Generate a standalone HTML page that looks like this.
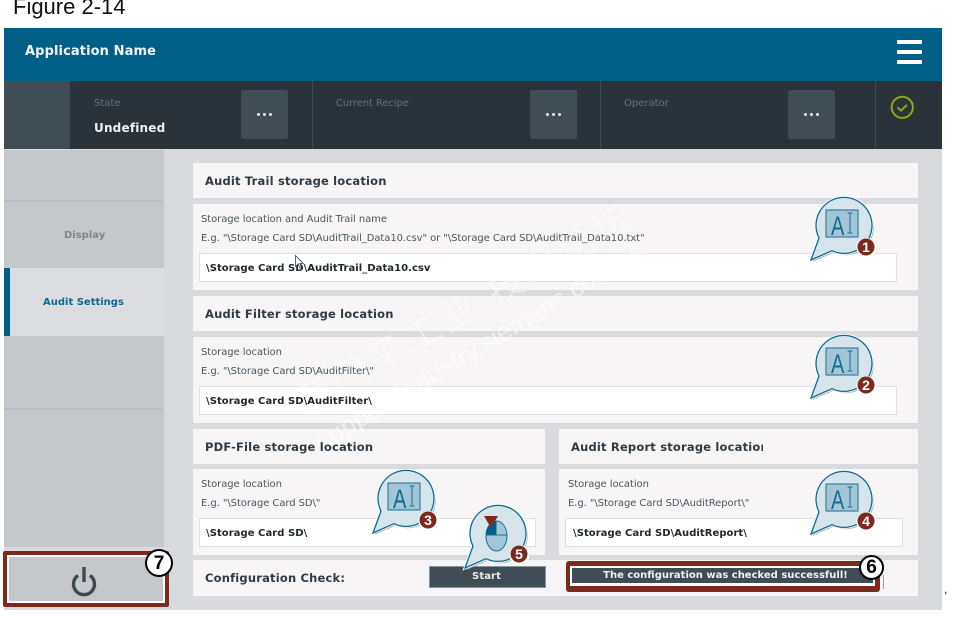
<!DOCTYPE html>
<html><head><meta charset="utf-8"><style>
html,body{margin:0;padding:0;background:#fff}
body{width:967px;height:642px;position:relative;overflow:hidden;font-family:"DejaVu Sans",sans-serif}
.a{position:absolute}
.t{position:absolute;white-space:nowrap}
.panel{position:absolute;background:#f7f5f6}
.h{position:absolute;z-index:2;white-space:nowrap;font-weight:bold;font-size:11.5px;color:#2f3b44;letter-spacing:.19px;line-height:14px}
.s{position:absolute;z-index:2;white-space:nowrap;font-size:10px;color:#4a5660;line-height:13px;letter-spacing:-.07px;margin-top:1px}
.i{position:absolute;background:#fff;border:1px solid #dfe0e3;box-sizing:border-box}
.v{position:absolute;z-index:2;white-space:nowrap;font-weight:bold;font-size:10px;color:#20282e;line-height:13px;letter-spacing:.05px;margin-top:1px}
.b{position:absolute;width:47px;height:49px;background:#414d54;border-radius:2px;color:#fff}
.b i{position:absolute;top:23px;width:3px;height:3px;border-radius:50%;background:#e8eaeb}
.sep{position:absolute;top:81px;width:1px;height:68px;background:#3f4a50}
.bb{position:absolute;z-index:3}
.wm{position:absolute;z-index:1;white-space:nowrap;color:rgba(255,255,255,.55)}
</style></head><body>
<div class="t" style="left:13px;top:-6px;font:22px/26px 'Liberation Sans',sans-serif;color:#111">Figure 2-14</div>

<div class="a" style="left:4px;top:28px;width:938px;height:582px;background:#d9dadd"></div>
<div class="a" style="left:4px;top:28px;width:938px;height:53px;background:#005f87"></div>
<div class="t" style="left:25px;top:44px;font-weight:bold;font-size:13px;line-height:16px;color:#f2f5f7;letter-spacing:.1px">Application Name</div>
<div class="a" style="left:897px;top:40px;width:25px;height:4px;background:#fff;border-radius:1px"></div>
<div class="a" style="left:897px;top:50px;width:25px;height:4px;background:#fff;border-radius:1px"></div>
<div class="a" style="left:897px;top:60px;width:25px;height:4px;background:#fff;border-radius:1px"></div>

<div class="a" style="left:4px;top:81px;width:938px;height:68px;background:#2a3339"></div>
<div class="a" style="left:4px;top:81px;width:66px;height:68px;background:#414d54"></div>
<div class="sep" style="left:312px"></div><div class="sep" style="left:600px"></div><div class="sep" style="left:875px"></div>
<div class="t" style="left:94px;top:97px;font-size:10px;line-height:13px;color:#66727a">State</div>
<div class="t" style="left:94px;top:121px;font-weight:bold;font-size:12px;line-height:15px;color:#eef0f1;letter-spacing:.2px">Undefined</div>
<div class="t" style="left:336px;top:97px;font-size:10px;line-height:13px;color:#66727a;letter-spacing:-.1px">Current Recipe</div>
<div class="t" style="left:624px;top:97px;font-size:10px;line-height:13px;color:#66727a">Operator</div>
<div class="b" style="left:241px;top:90px"><i style="left:16px"></i><i style="left:22px"></i><i style="left:28px"></i></div>
<div class="b" style="left:530px;top:90px"><i style="left:16px"></i><i style="left:22px"></i><i style="left:28px"></i></div>
<div class="b" style="left:788px;top:90px"><i style="left:16px"></i><i style="left:22px"></i><i style="left:28px"></i></div>
<svg class="a" style="left:890px;top:95px" width="25" height="25" viewBox="0 0 25 25" fill="none" stroke="#8fa51a"><circle cx="12.3" cy="12.3" r="10.6" stroke-width="2"/><path d="M7.5 12.5l3.5 3 6-5.5" stroke-width="2"/></svg>

<div class="a" style="left:4px;top:150px;width:160px;height:397px;background:#c5c8cb"></div>
<div class="a" style="left:4px;top:200px;width:158px;height:2px;background:#babdc1"></div>
<div class="a" style="left:4px;top:268px;width:160px;height:68px;background:#dcdde1"></div>
<div class="a" style="left:4px;top:268px;width:6px;height:68px;background:#005f87"></div>
<div class="a" style="left:4px;top:408px;width:158px;height:2px;background:#babdc1"></div>
<div class="t" style="left:64px;top:229px;font-weight:bold;font-size:10px;line-height:14px;color:#7f878d">Display</div>
<div class="t" style="left:43px;top:296px;font-weight:bold;font-size:10px;line-height:14px;color:#0b6a92">Audit Settings</div>

<!-- power -->
<div class="a" style="left:3px;top:551px;width:166px;height:56px;background:#7d2a1e;border-radius:2px"></div>
<div class="a" style="left:7px;top:555px;width:158px;height:48px;background:#fff"></div>
<div class="a" style="left:9px;top:557px;width:154px;height:44px;background:#c5c8cb"></div>
<svg class="a" style="left:70px;top:565px" width="28" height="34" viewBox="0 0 28 34" fill="none" stroke="#3e484e" stroke-width="3.4"><path d="M8 10.500A10.500 10.500 0 1 0 20 10.500"/><path d="M14 2v15"/></svg>
<div class="a" style="left:145px;top:549px;width:24px;height:24px;border:2.500px solid #000;border-radius:50%;background:#fff;text-align:center;font:bold 19px/25px 'Liberation Sans',sans-serif;color:#000">7</div>

<!-- panels -->
<div class="panel" style="left:193px;top:163px;width:725px;height:35px"></div>
<div class="h" style="left:205px;top:174px">Audit Trail storage location</div>
<div class="panel" style="left:193px;top:204px;width:725px;height:86px"></div>
<div class="s" style="left:201px;top:212px">Storage location and Audit Trail name</div>
<div class="s" style="left:201px;top:231px">E.g. "\Storage Card SD\AuditTrail_Data10.csv" or "\Storage Card SD\AuditTrail_Data10.txt"</div>
<div class="i" style="left:199px;top:253px;width:698px;height:29px"></div>
<div class="v" style="left:206px;top:261px">\Storage Card SD\AuditTrail_Data10.csv</div>
<svg class="bb" style="left:295px;top:255px" width="10" height="16" viewBox="0 0 10 16"><path d="M.5.5v11l2.700-2.500 1.800 4 1.500-.7-1.800-3.800h3.500z" fill="#fff" stroke="#39434a" stroke-width=".8"/></svg>

<div class="panel" style="left:193px;top:296px;width:725px;height:35px"></div>
<div class="h" style="left:205px;top:307px">Audit Filter storage location</div>
<div class="panel" style="left:193px;top:337px;width:725px;height:86px"></div>
<div class="s" style="left:201px;top:345px">Storage location</div>
<div class="s" style="left:201px;top:364px">E.g. "\Storage Card SD\AuditFilter\"</div>
<div class="i" style="left:199px;top:386px;width:698px;height:29px"></div>
<div class="v" style="left:206px;top:394px">\Storage Card SD\AuditFilter\</div>

<div class="panel" style="left:193px;top:429px;width:352px;height:35px"></div>
<div class="h" style="left:205px;top:440px">PDF-File storage location</div>
<div class="panel" style="left:193px;top:469px;width:352px;height:86px"></div>
<div class="s" style="left:201px;top:477px">Storage location</div>
<div class="s" style="left:201px;top:496px">E.g. "\Storage Card SD\"</div>
<div class="i" style="left:199px;top:518px;width:337px;height:29px"></div>
<div class="v" style="left:206px;top:526px">\Storage Card SD\</div>

<div class="panel" style="left:559px;top:429px;width:359px;height:35px"></div>
<div class="h" style="left:571px;top:440px;width:192px;overflow:hidden">Audit Report storage location</div>
<div class="panel" style="left:559px;top:469px;width:359px;height:86px"></div>
<div class="s" style="left:568px;top:477px">Storage location</div>
<div class="s" style="left:568px;top:496px">E.g. "\Storage Card SD\AuditReport\"</div>
<div class="i" style="left:565px;top:518px;width:338px;height:29px"></div>
<div class="v" style="left:573px;top:526px">\Storage Card SD\AuditReport\</div>

<div class="panel" style="left:193px;top:560px;width:725px;height:36px"></div>
<div class="h" style="left:205px;top:571px">Configuration Check:</div>
<div class="a" style="left:429px;top:566px;width:117px;height:22px;box-sizing:border-box;background:#414d54;border:1px solid #7f95ad"></div>
<div class="t" style="left:428px;top:570px;width:117px;text-align:center;font-weight:bold;font-size:10px;line-height:14px;color:#e8eaeb;letter-spacing:.1px">Start</div>

<div class="a" style="left:566px;top:561px;width:314px;height:31px;background:#7d2a1e;border-radius:3px"></div>
<div class="a" style="left:570px;top:566px;width:305px;height:20px;background:#fff"></div>
<div class="a" style="left:572px;top:568px;width:301px;height:15px;background:#414d54"></div>
<div class="a" style="left:883px;top:575px;width:1px;height:14px;background:#9aa0a5"></div>
<div class="t" style="left:573px;top:569px;width:305px;text-align:center;font-weight:bold;font-size:10px;line-height:14px;color:#f0f1f2">The configuration was checked successfull!</div>
<div class="a" style="left:859px;top:555px;width:21px;height:21px;border:2.500px solid #000;border-radius:50%;background:#fff;text-align:center;font:bold 19px/22px 'Liberation Sans',sans-serif;color:#000">6</div>
<div class="t" style="left:944px;top:582px;font:12px/14px 'Liberation Sans',sans-serif;color:#111">,</div>

<!-- watermark -->
<div class="wm" style="left:299px;top:382px;font-size:36px;line-height:40px;font-family:'Noto Sans CJK SC',sans-serif;font-weight:300;letter-spacing:5px;transform:rotate(-30deg);transform-origin:0 50%">西门子工业 技术论坛</div>
<div class="wm" style="left:318px;top:427px;font:26px/32px 'Liberation Sans',sans-serif;transform:rotate(-31deg);transform-origin:0 50%">support.industry.siemens.com/cs</div>

<!-- bubbles -->
<svg width="0" height="0" style="position:absolute"><defs>
<g id="bub">
<path d="M11 70L19 48A28 28 0 1 1 32 60.700Z" transform="translate(1.800,1.800)" fill="#a3a5a7"/>
<path d="M11 70L19 48A28 28 0 1 1 32 60.700Z" fill="#fff" stroke="#fff" stroke-width="3"/>
<path d="M11 70L19 48A28 28 0 1 1 32 60.700Z" fill="#d6e5ec" stroke="#0f6c90" stroke-width="1.300"/>
</g>
<g id="ai"><rect x="26" y="20" width="32" height="27" fill="#a3c6d6" stroke="#1a6f92" stroke-width="1"/>
<path d="M47.500 23h5M50 23v20M47.500 43h5" fill="none" stroke="#1a6f92" stroke-width="1"/></g>
</defs></svg>

<svg class="bb" style="left:800px;top:190px" width="90" height="80"><use href="#bub"/><use href="#ai"/><text transform="translate(31,45) scale(.74,1)" font-family="Liberation Sans" font-size="27" fill="#0f6c90">A</text><circle cx="66.500" cy="58" r="10" fill="#fff"/><circle cx="66" cy="57" r="8.500" fill="#7d2a1e"/><text x="66" y="62" text-anchor="middle" font-family="Liberation Sans" font-weight="bold" font-size="14" fill="#fff">1</text></svg>
<svg class="bb" style="left:800px;top:328px" width="90" height="80"><use href="#bub"/><use href="#ai"/><text transform="translate(31,45) scale(.74,1)" font-family="Liberation Sans" font-size="27" fill="#0f6c90">A</text><circle cx="66.500" cy="58" r="10" fill="#fff"/><circle cx="66" cy="57" r="8.500" fill="#7d2a1e"/><text x="66" y="62" text-anchor="middle" font-family="Liberation Sans" font-weight="bold" font-size="14" fill="#fff">2</text></svg>
<svg class="bb" style="left:362px;top:463px" width="90" height="80"><use href="#bub"/><use href="#ai"/><text transform="translate(31,45) scale(.74,1)" font-family="Liberation Sans" font-size="27" fill="#0f6c90">A</text><circle cx="66.500" cy="58" r="10" fill="#fff"/><circle cx="66" cy="57" r="8.500" fill="#7d2a1e"/><text x="66" y="62" text-anchor="middle" font-family="Liberation Sans" font-weight="bold" font-size="14" fill="#fff">3</text></svg>
<svg class="bb" style="left:800px;top:464px" width="90" height="80"><use href="#bub"/><use href="#ai"/><text transform="translate(31,45) scale(.74,1)" font-family="Liberation Sans" font-size="27" fill="#0f6c90">A</text><circle cx="66.500" cy="58" r="10" fill="#fff"/><circle cx="66" cy="57" r="8.500" fill="#7d2a1e"/><text x="66" y="62" text-anchor="middle" font-family="Liberation Sans" font-weight="bold" font-size="14" fill="#fff">4</text></svg>
<svg class="bb" style="left:454px;top:498px" width="90" height="80"><use href="#bub"/>
<ellipse cx="42.500" cy="38" rx="10.500" ry="15" fill="#a3c6d6" stroke="#1a6f92"/>
<path d="M32 37v-1a10.500 13 0 0 1 10.500-13v14z" fill="#005f87"/><path d="M32 37h21" stroke="#1a6f92"/>
<path d="M30 18h14l-7 12z" fill="#7d2a1e"/>
<circle cx="65.500" cy="57" r="10" fill="#fff"/><circle cx="65" cy="56" r="8.500" fill="#7d2a1e"/><text x="65" y="61" text-anchor="middle" font-family="Liberation Sans" font-weight="bold" font-size="14" fill="#fff">5</text></svg>
</body></html>
